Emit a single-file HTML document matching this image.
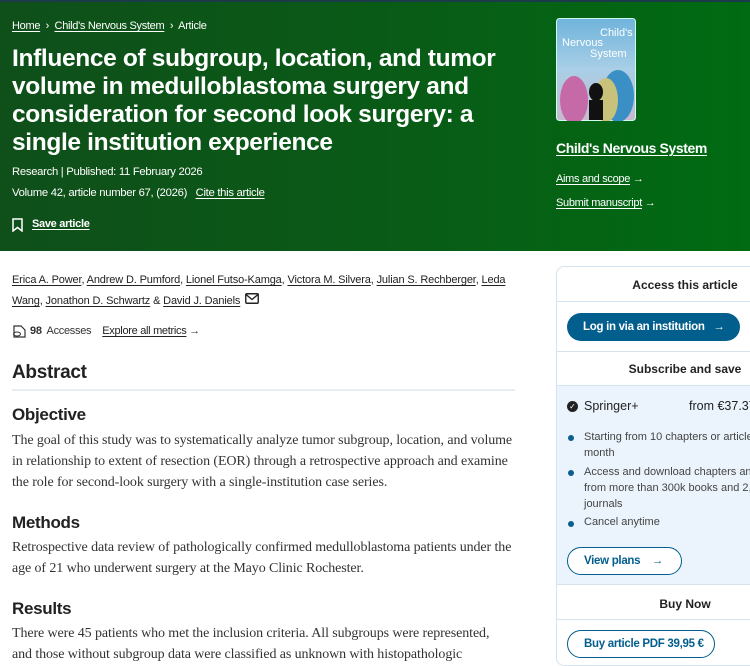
<!DOCTYPE html>
<html><head><meta charset="utf-8"><style>
*{margin:0;padding:0;box-sizing:border-box}
body{width:750px;height:658px;overflow:hidden;background:#fff;font-family:"Liberation Sans",sans-serif;position:relative;color:#222}
.hdr{position:absolute;left:0;top:0;width:750px;height:251px;background:linear-gradient(90deg,#0f4f1a 0%,#0a5a17 50%,#006b12 100%);border-top:2px solid #1b3a4a}
.a{position:absolute;white-space:nowrap}
.w{color:#fff}
u{text-decoration:underline;text-underline-offset:2px}
.t{font-size:24.5px;font-weight:bold;color:#fff;letter-spacing:-0.35px}
.s{font-size:11px;letter-spacing:-0.3px}
.b{font-family:"Liberation Serif",serif;font-size:14px;color:#333;letter-spacing:-0.1px}
.h{font-size:17px;font-weight:bold;color:#222;letter-spacing:-0.3px}
.panel{position:absolute;left:556px;top:266px;width:210px;height:400px;border:1px solid #d5e3ee;border-radius:8px;overflow:hidden}
.sec{position:absolute;left:0;width:210px;font-size:12px;font-weight:bold;color:#222;text-align:center;padding-left:46px}
.bl{position:absolute;width:6px;height:6px;border-radius:3px;background:#0b5e8e}
.btn{position:absolute;display:flex;align-items:center;font-size:11.5px;font-weight:bold;letter-spacing:-0.3px;border-radius:14px;white-space:nowrap}
</style></head><body>
<div class="hdr"></div>
<div class="a w s" style="left:12px;top:20px"><u>Home</u> &nbsp;›&nbsp; <u>Child's Nervous System</u> &nbsp;›&nbsp; Article</div>
<div class="a t" style="left:12px;top:45px;line-height:28px">Influence of subgroup, location, and tumor<br>volume in medulloblastoma surgery and<br>consideration for second look surgery: a<br>single institution experience</div>
<div class="a w s" style="left:12px;top:166px;font-size:11.3px">Research | Published: 11 February 2026</div>
<div class="a w s" style="left:12px;top:187px;font-size:11.3px">Volume 42, article number 67, (2026) &nbsp;&nbsp;<u>Cite this article</u></div>
<svg class="a" style="left:12px;top:218px" width="11" height="14"><path d="M1 1h9v12l-4.5-3.5L1 13z" fill="none" stroke="#fff" stroke-width="1.5"/></svg>
<div class="a w s" style="left:32px;top:218px;font-weight:bold"><u>Save article</u></div>
<svg class="a" style="left:556px;top:18px" width="80" height="103"><defs><linearGradient id="g" x1="0" y1="0" x2="0" y2="1"><stop offset="0" stop-color="#6fb3dc"/><stop offset="0.5" stop-color="#a8cfe6"/><stop offset="1" stop-color="#c9b9cf"/></linearGradient></defs><rect x="0.5" y="0.5" width="79" height="102" rx="3" fill="url(#g)" stroke="#cfe"/><ellipse cx="18" cy="82" rx="14" ry="24" fill="#c56aa6"/><ellipse cx="62" cy="78" rx="16" ry="26" fill="#3a8fc4"/><ellipse cx="50" cy="82" rx="12" ry="22" fill="#c9c27a"/><ellipse cx="40" cy="74" rx="7" ry="9" fill="#111"/><rect x="33" y="82" width="14" height="20" fill="#111"/><text x="44" y="18" font-size="11" fill="#fff" font-family="Liberation Sans">Child's</text><text x="6" y="28" font-size="11" fill="#fff" font-family="Liberation Sans">Nervous</text><text x="34" y="39" font-size="11" fill="#fff" font-family="Liberation Sans">System</text></svg>
<div class="a w" style="left:556px;top:140px;font-size:14px;font-weight:bold;letter-spacing:-0.4px"><u>Child's Nervous System</u></div>
<div class="a w s" style="left:556px;top:173px"><u>Aims and scope</u> →</div>
<div class="a w s" style="left:556px;top:197px"><u>Submit manuscript</u> →</div>

<div class="a s" style="left:12px;top:270px;line-height:21px;color:#222;letter-spacing:-0.15px"><u>Erica A. Power</u>, <u>Andrew D. Pumford</u>, <u>Lionel Futso-Kamga</u>, <u>Victora M. Silvera</u>, <u>Julian S. Rechberger</u>, <u>Leda</u><br><u>Wang</u>, <u>Jonathon D. Schwartz</u> &amp; <u>David J. Daniels</u></div>
<svg class="a" style="left:245px;top:293px" width="14" height="11"><rect x="0.75" y="0.75" width="12.5" height="9.5" rx="1" fill="none" stroke="#222" stroke-width="1.4"/><path d="M1 1.5l6 5 6-5" fill="none" stroke="#222" stroke-width="1.4"/></svg>
<svg class="a" style="left:12px;top:325px" width="14" height="13"><path d="M2 1h7l4 4v7H2z" fill="none" stroke="#333" stroke-width="1.2"/><ellipse cx="5" cy="9" rx="3.5" ry="2" fill="none" stroke="#333"/></svg>
<div class="a s" style="left:30px;top:325px;color:#333"><b>98</b>&nbsp; Accesses &nbsp;&nbsp; <u style="color:#222">Explore all metrics</u> →</div>
<div class="a" style="left:12px;top:362px;font-size:19px;font-weight:bold;letter-spacing:-0.3px">Abstract</div>
<div class="a" style="left:12px;top:389px;width:503px;height:2px;background:#e6eef5"></div>
<div class="a h" style="left:12px;top:405px">Objective</div>
<div class="a b" style="left:12px;top:430px;line-height:21px">The goal of this study was to systematically analyze tumor subgroup, location, and volume<br>in relationship to extent of resection (EOR) through a retrospective approach and examine<br>the role for second-look surgery with a single-institution case series.</div>
<div class="a h" style="left:12px;top:513px">Methods</div>
<div class="a b" style="left:12px;top:537px;line-height:21px">Retrospective data review of pathologically confirmed medulloblastoma patients under the<br>age of 21 who underwent surgery at the Mayo Clinic Rochester.</div>
<div class="a h" style="left:12px;top:599px">Results</div>
<div class="a b" style="left:12px;top:623px;line-height:21px">There were 45 patients who met the inclusion criteria. All subgroups were represented,<br>and those without subgroup data were classified as unknown with histopathologic</div>

<div class="panel">
<div class="sec" style="top:11px">Access this article</div>
<div class="a" style="left:0;top:34px;width:210px;height:1px;background:#d5e3ee"></div>
<div class="btn" style="left:10px;top:46px;width:173px;height:28px;background:#025e8d;color:#fff;padding-left:16px">Log in via an institution &nbsp;&nbsp;→</div>
<div class="a" style="left:0;top:84px;width:210px;height:1px;background:#d5e3ee"></div>
<div class="sec" style="top:95px">Subscribe and save</div>
<div class="a" style="left:0;top:118px;width:210px;height:200px;background:#ebf4fc;border-top:1px solid #d5e3ee;border-bottom:1px solid #d5e3ee"></div>
<div class="a" style="left:10px;top:134px;width:11px;height:11px;border-radius:6px;background:#222;color:#fff;font-size:8px;text-align:center;line-height:11px">✓</div>
<div class="a" style="left:27px;top:132px;font-size:12.5px;color:#222">Springer+</div>
<div class="a" style="left:132px;top:132px;font-size:12.5px;color:#222">from €37.37</div>
<div class="bl" style="left:11px;top:168px"></div><div class="bl" style="left:11px;top:203px"></div><div class="bl" style="left:11px;top:254px"></div>
<div class="a" style="left:27px;top:162px;font-size:11px;line-height:16px;color:#444">Starting from 10 chapters or articles per<br>month</div>
<div class="a" style="left:27px;top:197px;font-size:11px;line-height:16px;color:#444">Access and download chapters and articles<br>from more than 300k books and 2,500<br>journals</div>
<div class="a" style="left:27px;top:249px;font-size:11px;color:#444">Cancel anytime</div>
<div class="btn" style="left:10px;top:280px;width:115px;height:28px;border:1px solid #025e8d;background:#fff;color:#025e8d;padding-left:16px">View plans &nbsp;&nbsp;&nbsp;→</div>
<div class="sec" style="top:330px">Buy Now</div>
<div class="a" style="left:0;top:352px;width:210px;height:1px;background:#d5e3ee"></div>
<div class="btn" style="left:10px;top:363px;width:148px;height:28px;border:1px solid #025e8d;color:#025e8d;padding-left:16px">Buy article PDF 39,95 €</div>
</div>
</body></html>
